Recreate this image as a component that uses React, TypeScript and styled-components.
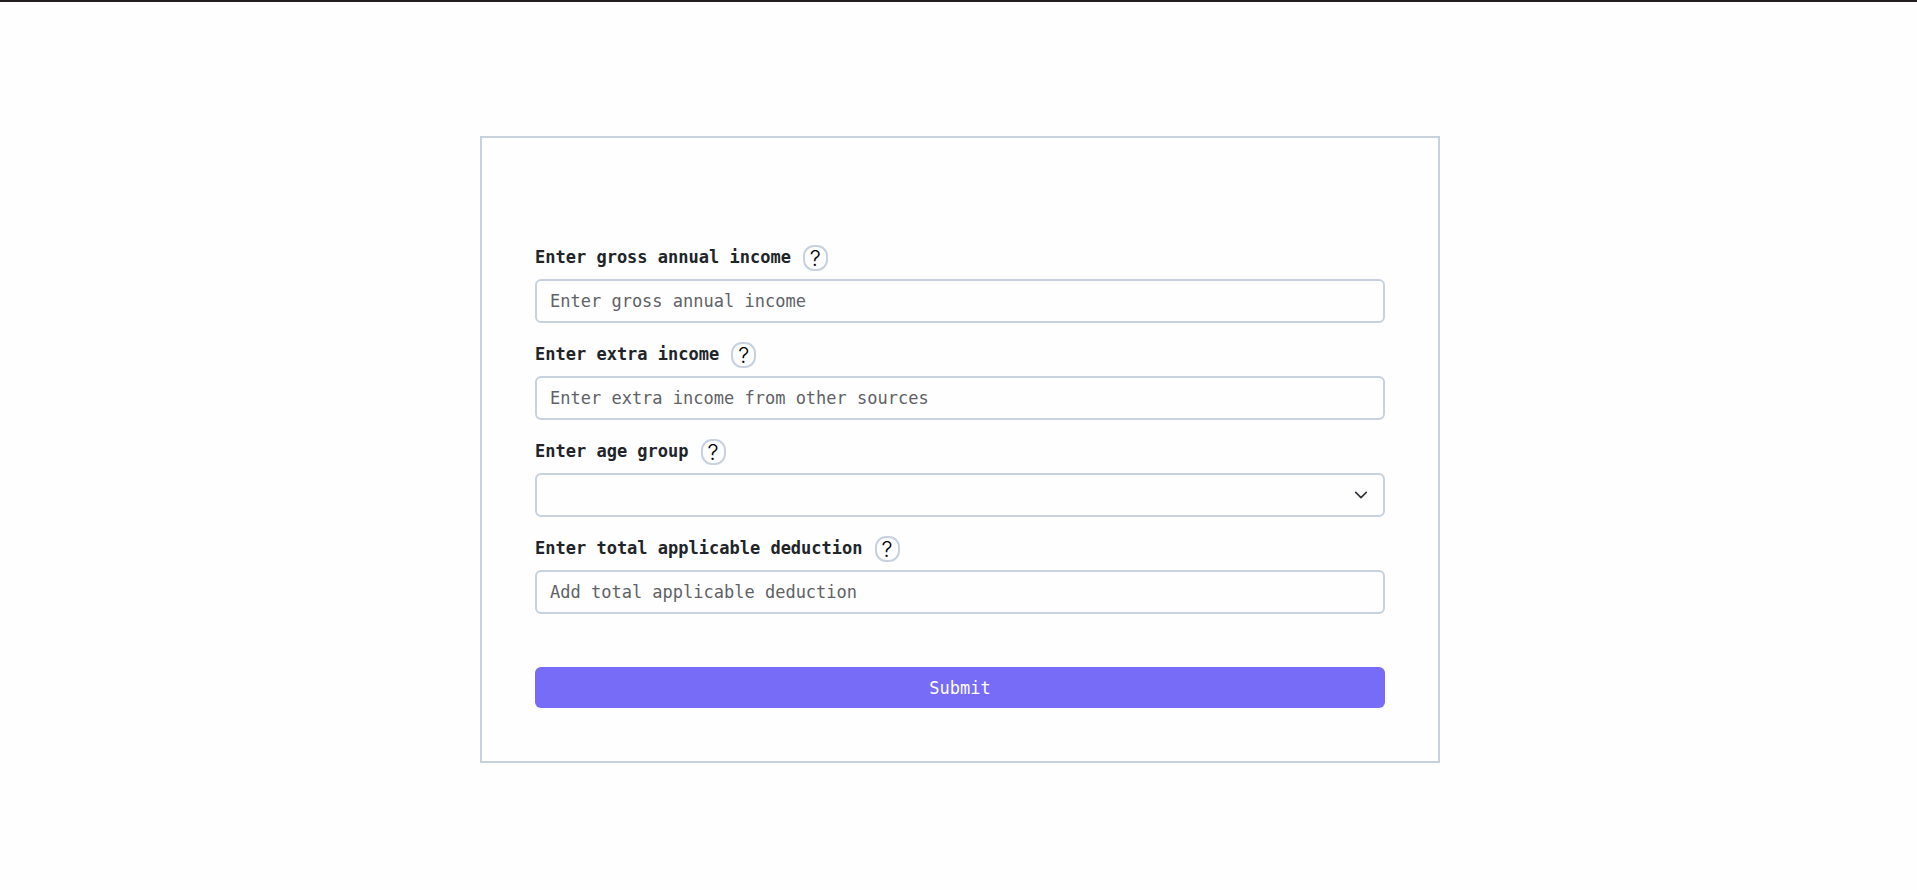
import React, { useId } from "react";
import styled, { createGlobalStyle } from "styled-components";

const GlobalStyle = createGlobalStyle`
  *, *::before, *::after {
    box-sizing: border-box;
  }

  body {
    margin: 0;
    background: #fefefe;
    color: #212529;
    font-family: "DejaVu Sans Mono", monospace;
    font-size: 17px;
    line-height: 26px;
  }
`;

const Page = styled.main`
  display: flex;
  justify-content: center;
  min-height: 100vh;
  padding: 134px 0 53px 3px;
  border-top: 2px solid #231f20;
`;

const Form = styled.form`
  display: flex;
  flex-direction: column;
  align-self: flex-start;
  gap: 53px;
  width: 100%;
  max-width: 960px;
  padding: 107px 53px 53px;
  border: 2px solid #c7d2de;
`;

const Fields = styled.div`
  display: flex;
  flex-direction: column;
  gap: 19px;
`;

const Field = styled.div`
  display: flex;
  flex-direction: column;
  gap: 8px;
`;

const FieldHeader = styled.div`
  display: flex;
  align-items: flex-start;
  gap: 12px;
`;

const Label = styled.label`
  font-weight: 700;
  line-height: 24px;
`;

const HelpButton = styled.button`
  display: flex;
  align-items: center;
  justify-content: center;
  width: 25px;
  height: 26px;
  padding: 0;
  border: 2px solid #c7d2de;
  border-radius: 11px;
  background: transparent;
  color: #000;
  font-family: Inter, sans-serif;
  font-size: 22px;
  font-weight: 300;
  line-height: 22px;
  cursor: pointer;
`;

const Input = styled.input`
  width: 100%;
  height: 44px;
  padding: 6px 13px;
  border: 2px solid #c7d2de;
  border-radius: 6px;
  background: transparent;
  color: inherit;
  font: inherit;

  &::placeholder {
    color: #5f6266;
    opacity: 1;
  }
`;

const SelectBox = styled.div`
  display: grid;
  align-items: center;

  & > * {
    grid-area: 1 / 1;
  }
`;

const Select = styled.select`
  appearance: none;
  width: 100%;
  height: 44px;
  padding: 6px 40px 6px 13px;
  border: 2px solid #c7d2de;
  border-radius: 6px;
  background: transparent;
  color: inherit;
  font: inherit;
`;

const Chevron = styled.svg`
  justify-self: end;
  width: 14px;
  height: 14px;
  margin-right: 17px;
  pointer-events: none;
`;

const SubmitButton = styled.button`
  height: 41px;
  border: 0;
  border-radius: 6px;
  background: #776cf7;
  color: #fff;
  font: inherit;
  cursor: pointer;
`;

type FormFieldProps = {
  label: string;
  placeholder?: string;
  options?: string[];
};

function FormField({ label, placeholder, options }: FormFieldProps) {
  const id = useId();
  return (
    <Field>
      <FieldHeader>
        <Label htmlFor={id}>{label}</Label>
        <HelpButton type="button">?</HelpButton>
      </FieldHeader>
      {options ? (
        <SelectBox>
          <Select id={id} defaultValue="">
            {options.map((option) => (
              <option key={option}>{option}</option>
            ))}
          </Select>
          <Chevron viewBox="0 0 16 16" fill="none" stroke="#343a40" strokeWidth="2" strokeLinecap="round" strokeLinejoin="round" aria-hidden="true">
            <path d="m2 5 6 6 6-6" />
          </Chevron>
        </SelectBox>
      ) : (
        <Input id={id} type="text" placeholder={placeholder} />
      )}
    </Field>
  );
}

export default function App() {
  return (
    <>
      <GlobalStyle />
      <Page>
        <Form onSubmit={(event: React.FormEvent) => event.preventDefault()}>
          <Fields>
            <FormField label="Enter gross annual income" placeholder="Enter gross annual income" />
            <FormField label="Enter extra income" placeholder="Enter extra income from other sources" />
            <FormField label="Enter age group" options={[""]} />
            <FormField label="Enter total applicable deduction" placeholder="Add total applicable deduction" />
          </Fields>
          <SubmitButton type="submit">Submit</SubmitButton>
        </Form>
      </Page>
    </>
  );
}
